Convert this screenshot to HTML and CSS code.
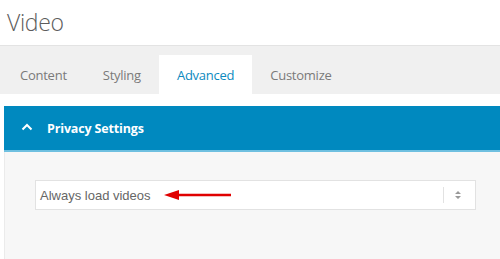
FILE: index.html
```html
<!DOCTYPE html>
<html>
<head>
<meta charset="utf-8">
<link rel="stylesheet" href="styles.css">
</head>
<body>
<div class="header"><h1 class="title">Video</h1></div>
<div class="tabs">
  <div class="tab">Content</div>
  <div class="tab">Styling</div>
  <div class="tab active">Advanced</div>
  <div class="tab">Customize</div>
</div>
<div class="panel">
  <div class="panel-head">
    <svg class="chev" width="12" height="8" viewBox="0 0 12 8"><path d="M1.5 6.5 L6 2 L10.5 6.5" fill="none" stroke="#fff" stroke-width="2"/></svg>
    <span class="panel-title">Privacy Settings</span>
  </div>
  <div class="panel-body">
    <div class="select">
      <span class="select-text">Always load videos</span>
      <svg class="red-arrow" width="70" height="12" viewBox="0 0 70 12"><path d="M14 6 H68" stroke="#e00000" stroke-width="2.5"/><path d="M1 6 L16 1 L16 11 Z" fill="#e00000"/></svg>
      <span class="sep"></span>
      <svg class="updown" width="6" height="12" viewBox="0 0 6 12"><path d="M0 5 L3 2 L6 5 Z M0 7 L3 10 L6 7 Z" fill="#999"/></svg>
    </div>
  </div>
</div>
</body>
</html>
```
FILE: styles.css
```css
html, body { margin: 0; padding: 0; background: #fff; }
body { font-family: "Open Sans", "Noto Sans", sans-serif; width: 500px; height: 259px; overflow: hidden; }
.header { border-bottom: 1px solid #e3e3e3; box-sizing: border-box; height: 46px; }
.title { margin: 0; padding: 8px 0 0 7px; font-weight: 300; font-size: 23px; line-height: 28px; color: #5c5c5c; font-family: "Open Sans", sans-serif; letter-spacing: -0.3px; }
.tabs { display: flex; background: #f0f0f0; height: 48px; padding: 9px 0 0 2px; box-sizing: border-box; }
.tab { padding: 0 18px; height: 39px; line-height: 41px; font-size: 13px; color: #7a7a7a; letter-spacing: -0.25px; }
.tab.active { background: #fff; color: #0b8ac0; }
.panel { margin: 12px 0 0 4px; }
.panel-head { background: #0089bf; height: 44px; border-bottom: 2px solid #6fc0e0; display: flex; align-items: center; padding-left: 17px; }
.chev { margin-right: 14px; margin-top: -2px; }
.panel-title { color: #fff; font-weight: 700; font-size: 12.5px; letter-spacing: -0.15px; }
.panel-body { background: #f7f7f7; border-left: 1px solid #ebebeb; height: 107px; padding: 28px 0 0 30px; box-sizing: border-box; }
.select { width: 441px; height: 30px; box-sizing: border-box; background: #fff; border: 1px solid #e2e2e2; display: flex; align-items: center; padding-left: 4px; }
.select-text { font-family: "Liberation Sans", Arial, sans-serif; font-size: 13px; color: #666; }
.red-arrow { margin-left: 12px; }
.sep { margin-left: auto; width: 1px; height: 16px; background: #e2e2e2; }
.updown { margin: 0 14px 0 11px; }
```
